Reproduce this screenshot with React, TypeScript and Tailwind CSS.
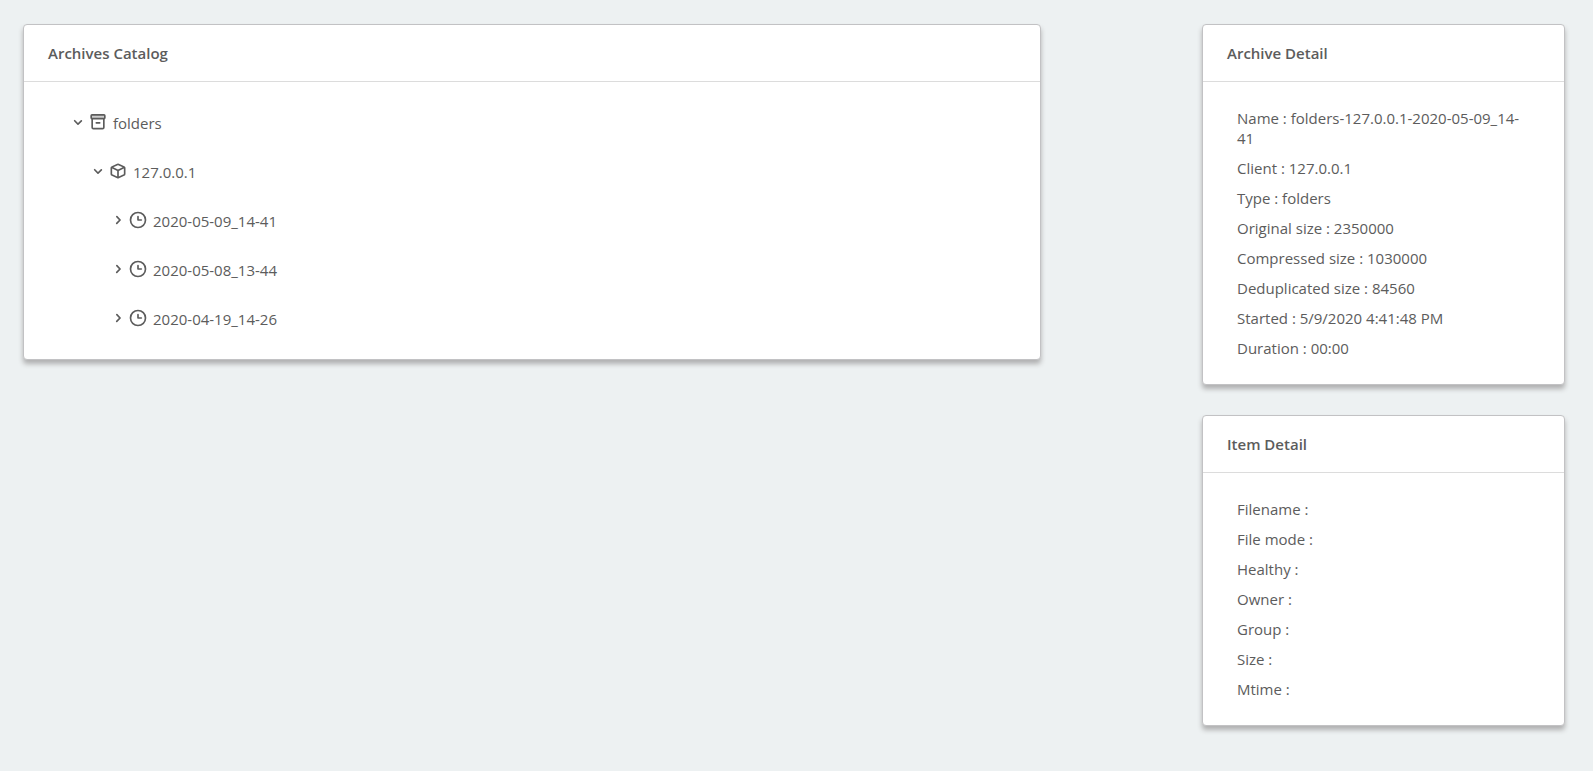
import type { ReactNode } from "react";

type NodeKind = "archive" | "client" | "backup";

interface TreeNode {
  readonly label: string;
  readonly kind: NodeKind;
  readonly children?: readonly TreeNode[];
}

interface Detail {
  readonly label: string;
  readonly value?: string;
}

const catalog: readonly TreeNode[] = [
  {
    label: "folders",
    kind: "archive",
    children: [
      {
        label: "127.0.0.1",
        kind: "client",
        children: [
          { label: "2020-05-09_14-41", kind: "backup" },
          { label: "2020-05-08_13-44", kind: "backup" },
          { label: "2020-04-19_14-26", kind: "backup" },
        ],
      },
    ],
  },
];

const archiveDetails: readonly Detail[] = [
  { label: "Name", value: "folders-127.0.0.1-2020-05-09_14-41" },
  { label: "Client", value: "127.0.0.1" },
  { label: "Type", value: "folders" },
  { label: "Original size", value: "2350000" },
  { label: "Compressed size", value: "1030000" },
  { label: "Deduplicated size", value: "84560" },
  { label: "Started", value: "5/9/2020 4:41:48 PM" },
  { label: "Duration", value: "00:00" },
];

const itemDetails: readonly Detail[] = [
  { label: "Filename" },
  { label: "File mode" },
  { label: "Healthy" },
  { label: "Owner" },
  { label: "Group" },
  { label: "Size" },
  { label: "Mtime" },
];

function Icon({ children }: { readonly children: ReactNode }) {
  return (
    <svg viewBox="0 0 24 24" className="h-5 w-5 shrink-0 fill-current" aria-hidden="true">
      {children}
    </svg>
  );
}

function Chevron({ open }: { readonly open: boolean }) {
  return (
    <Icon>
      {open ? (
        <path d="M12 15.5a1 1 0 0 1-.71-.29l-4-4a1 1 0 1 1 1.42-1.42L12 13.1l3.3-3.18a1 1 0 1 1 1.38 1.44l-4 3.86a1 1 0 0 1-.68.28z" />
      ) : (
        <path d="M10.5 17a1 1 0 0 1-.71-.29 1 1 0 0 1 0-1.42L13.1 12 9.92 8.69a1 1 0 0 1 0-1.41 1 1 0 0 1 1.42 0l3.86 4a1 1 0 0 1 0 1.4l-4 4a1 1 0 0 1-.7.32z" />
      )}
    </Icon>
  );
}

function NodeIcon({ kind }: { readonly kind: NodeKind }) {
  if (kind === "archive") {
    return (
      <Icon>
        <rect x="3.8" y="3.5" width="16.4" height="4.4" rx="1" fillOpacity=".3" stroke="currentColor" strokeWidth="2" />
        <path d="M5 8v10.5a1.5 1.5 0 0 0 1.5 1.5h11a1.5 1.5 0 0 0 1.5-1.5V8" fill="none" stroke="currentColor" strokeWidth="2" />
        <rect x="9" y="12" width="6" height="2" rx=".87" />
      </Icon>
    );
  }
  if (kind === "client") {
    return (
      <Icon>
        <path d="M20.66 7.26c0-.07-.1-.14-.15-.21l-.09-.1a2.5 2.5 0 0 0-.86-.68l-6.4-3a2.7 2.7 0 0 0-2.26 0l-6.4 3a2.6 2.6 0 0 0-.86.68L3.52 7a1 1 0 0 0-.15.2A2.39 2.39 0 0 0 3 8.46v7.06a2.49 2.49 0 0 0 1.46 2.26l6.4 3a2.7 2.7 0 0 0 2.27 0l6.4-3A2.49 2.49 0 0 0 21 15.54V8.46a2.39 2.39 0 0 0-.34-1.2zm-8.95-2.2a.73.73 0 0 1 .58 0l5.33 2.48L12 10.15 6.38 7.54zM5.3 16a.47.47 0 0 1-.3-.43V9.1l6 2.79v6.72zm13.39 0L13 18.61v-6.72l6-2.79v6.44a.48.48 0 0 1-.31.46z" />
      </Icon>
    );
  }
  return (
    <Icon>
      <path d="M12 2a10 10 0 1 0 10 10A10 10 0 0 0 12 2zm0 18a8 8 0 1 1 8-8 8 8 0 0 1-8 8z" />
      <path d="M16 11h-3V8a1 1 0 0 0-2 0v4a1 1 0 0 0 1 1h4a1 1 0 0 0 0-2z" />
    </Icon>
  );
}

function TreeItem({ node }: { readonly node: TreeNode }) {
  const open = Boolean(node.children);
  return (
    <li className="pl-5">
      <button type="button" aria-expanded={open} className="flex h-[49px] w-full items-center gap-[5px] text-left">
        <span className="flex pb-px">
          <Chevron open={open} />
          <NodeIcon kind={node.kind} />
        </span>
        {node.label}
      </button>
      {node.children ? (
        <ul>
          {node.children.map((child) => (
            <TreeItem key={child.label} node={child} />
          ))}
        </ul>
      ) : null}
    </li>
  );
}

function Card({ title, children }: { readonly title: string; readonly children: ReactNode }) {
  return (
    <section className="rounded border border-[#c2c2c4] bg-white shadow-[0_4px_5px_#b0b0b1]">
      <h2 className="border-b border-[#dcdcdc] px-6 py-4 font-semibold leading-6">{title}</h2>
      {children}
    </section>
  );
}

function DetailList({ details }: { readonly details: readonly Detail[] }) {
  return (
    <ul className="px-6 py-[21px]">
      {details.map(({ label, value }) => (
        <li key={label} className="px-[10px] py-[5px]">
          {`${label} : ${value ?? ""}`}
        </li>
      ))}
    </ul>
  );
}

export default function App() {
  return (
    <main className="grid min-h-screen grid-cols-12 items-start gap-[30px] bg-[#edf1f2] pt-6 pr-7 pb-6 pl-[23px] font-['Open_Sans',sans-serif] text-[15px] leading-5 text-[#5c5c5c]">
      <div className="col-span-8">
        <Card title="Archives Catalog">
          <ul className="px-6 py-4">
            {catalog.map((node) => (
              <TreeItem key={node.label} node={node} />
            ))}
          </ul>
        </Card>
      </div>
      <div className="col-span-3 col-start-10 flex flex-col gap-[30px]">
        <Card title="Archive Detail">
          <DetailList details={archiveDetails} />
        </Card>
        <Card title="Item Detail">
          <DetailList details={itemDetails} />
        </Card>
      </div>
    </main>
  );
}
